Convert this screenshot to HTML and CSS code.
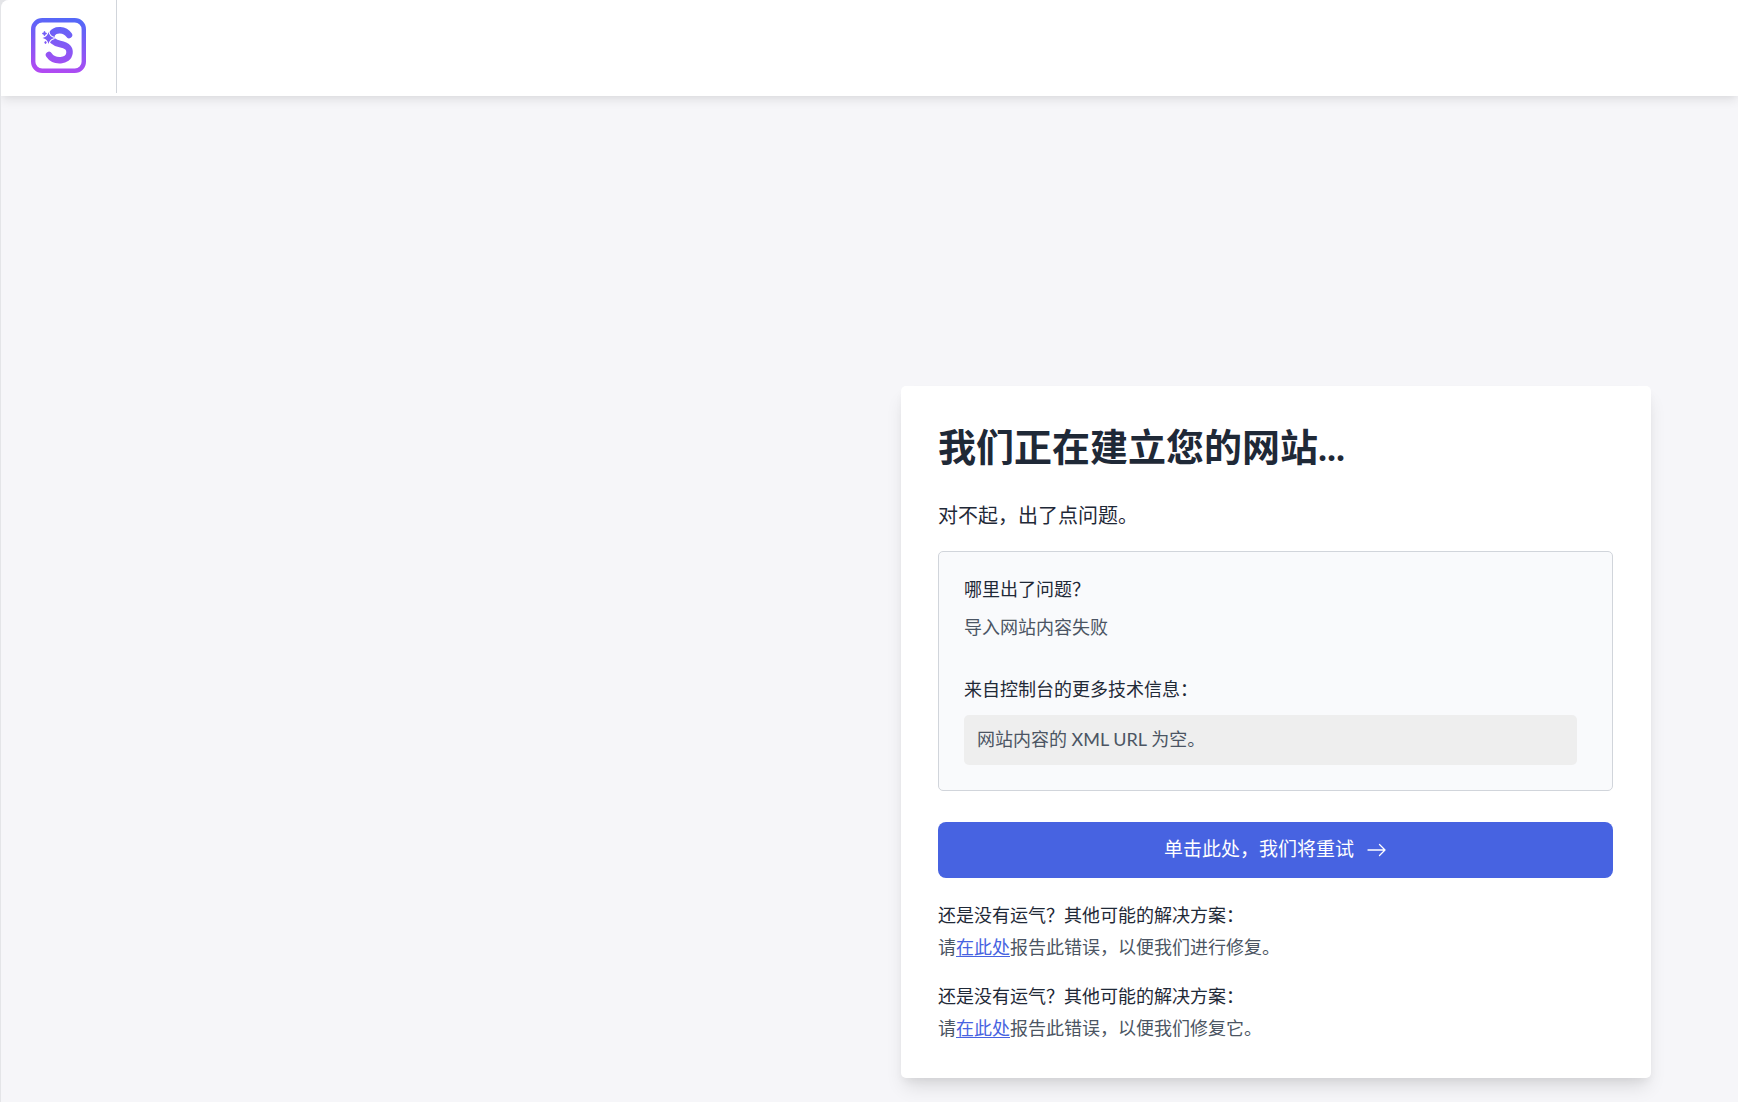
FILE: index.html
```html
<!DOCTYPE html>
<html lang="zh-CN">
<head>
<meta charset="utf-8">
<meta name="viewport" content="width=device-width, initial-scale=1">
<title>我们正在建立您的网站...</title>
<link rel="stylesheet" href="styles.css">
</head>
<body>
<div class="app">
  <header class="topbar">
    <div class="brand">
      <svg class="logo" viewBox="0 0 55 55" role="img" aria-label="S">
        <defs>
          <linearGradient id="brand-gradient" gradientUnits="userSpaceOnUse" x1="30" y1="0" x2="22" y2="55">
            <stop offset="0" stop-color="#5468f8"/>
            <stop offset="1" stop-color="#b24af2"/>
          </linearGradient>
        </defs>
        <rect x="2.200" y="2.200" width="50.600" height="50.600" rx="9" fill="none" stroke="url(#brand-gradient)" stroke-width="4.400"/>
        <path d="M38 17C34 11 24 10.500 21 16C18 22 24 25 29 26C36 27.500 39 30 38.500 35C37.500 44 23 44.500 18 37" fill="none" stroke="url(#brand-gradient)" stroke-width="6.500" stroke-linecap="round"/>
        <path d="M17.500 14Q18.500 19 23.500 20Q18.500 21 17.500 26Q16.500 21 11.500 20Q16.500 19 17.500 14Z" fill="url(#brand-gradient)" stroke="#fff" stroke-width="2" paint-order="stroke"/>
        <path d="M17.500 15.500L19 18.500L22 20L19 21.500L17.500 24.500L16 21.500L13 20L16 18.500Z" fill="url(#brand-gradient)"/>
        <path d="M13.500 13Q14 15 16 15.500Q14 16 13.500 18Q13 16 11 15.500Q13 15 13.500 13ZM14.500 23L15.500 24.500L14.500 26L13.500 24.500Z" fill="url(#brand-gradient)" stroke="url(#brand-gradient)" stroke-width=".500"/>
      </svg>
    </div>
  </header>
  <main class="stage">
    <section class="card">
      <h1 class="title">我们正在建立您的网站...</h1>
      <p class="lead">对不起，出了点问题。</p>
      <div class="details">
        <h2 class="label">哪里出了问题？</h2>
        <p class="reason">导入网站内容失败</p>
        <h2 class="label label-console">来自控制台的更多技术信息：</h2>
        <p class="console">网站内容的 XML URL 为空。</p>
      </div>
      <button class="retry" type="button">
        <span>单击此处，我们将重试</span>
        <svg class="arrow" viewBox="0 0 20 20" aria-hidden="true"><path d="M1 10H18M12.500 4.500L18 10L12.500 15.500"/></svg>
      </button>
      <div class="help">
        <h2 class="help-title">还是没有运气？其他可能的解决方案：</h2>
        <p>请<a href="#">在此处</a>报告此错误，以便我们进行修复。</p>
      </div>
      <div class="help">
        <h2 class="help-title">还是没有运气？其他可能的解决方案：</h2>
        <p>请<a href="#">在此处</a>报告此错误，以便我们修复它。</p>
      </div>
    </section>
  </main>
</div>
</body>
</html>
```
FILE: styles.css
```css
* { box-sizing: border-box; }

body {
  margin: 0;
  background: #e4e5e8;
  color: #1f2937;
  font-family: Lato, "Noto Sans CJK SC", sans-serif;
  font-size: 18px;
  font-weight: 400;
}

h1, h2, p { margin: 0; }

.app {
  display: flex;
  flex-direction: column;
  min-height: 100vh;
  margin-left: 1px;
  border-top-left-radius: 8px;
  background: #f6f6f9;
  overflow: hidden;
}

.topbar {
  display: flex;
  height: 96px;
  padding-bottom: 3px;
  background: #fff;
  box-shadow: 0 5px 10px -1px rgb(0 0 0 / 9%), 0 2px 5px -1px rgb(0 0 0 / 3%);
}

.brand {
  display: flex;
  align-items: center;
  padding: 0 30px 2px;
  border-right: 1px solid #d1d5db;
}

.logo { width: 55px; height: 55px; }

.stage {
  display: flex;
  flex: 1;
  justify-content: flex-end;
  align-items: flex-start;
  padding: 290px 87px 24px 24px;
}

.card {
  width: 100%;
  max-width: 750px;
  padding: 36px 38px 34px 37px;
  border-radius: 5px;
  background: #fff;
  box-shadow: 0 12px 19px -4px rgb(0 0 0 / 12%), 0 5px 8px -2px rgb(0 0 0 / 5%);
}

.title { font-size: 38px; font-weight: 700; line-height: 48px; }

.lead { margin-top: 31px; font-size: 20px; line-height: 28px; }

.details {
  margin-top: 22px;
  padding: 25px 35px 25px 25px;
  border: 1px solid #d1d5db;
  border-radius: 5px;
  background: #f9fafc;
  line-height: 25px;
}

.label, .help-title { font-size: 18px; font-weight: 400; }

.reason { margin-top: 13px; color: #4b5563; }

.label-console { margin-top: 37px; }

.console {
  display: flex;
  align-items: center;
  min-height: 50px;
  margin-top: 13px;
  padding: 0 13px 2px;
  border-radius: 5px;
  background: #eee;
  color: #4b5563;
}

.retry {
  display: flex;
  align-items: center;
  justify-content: center;
  gap: 13px;
  width: 100%;
  height: 56px;
  margin-top: 31px;
  padding: 0 24px;
  border: 0;
  border-radius: 8px;
  background: #4763e1;
  color: #fff;
  font: inherit;
  font-size: 19px;
  line-height: 24px;
  cursor: pointer;
}

.retry span { padding-bottom: 2px; }

.arrow {
  width: 20px;
  height: 20px;
  fill: none;
  stroke: currentColor;
  stroke-width: 1.3;
  stroke-linecap: round;
  stroke-linejoin: round;
}

.help { margin-top: 18px; color: #4b5563; line-height: 32px; }

.retry + .help { margin-top: 21px; }

.help + .help { margin-top: 17px; }

.help-title { color: #1f2937; }

.help a { color: #4763e1; text-underline-offset: 2px; }
```
